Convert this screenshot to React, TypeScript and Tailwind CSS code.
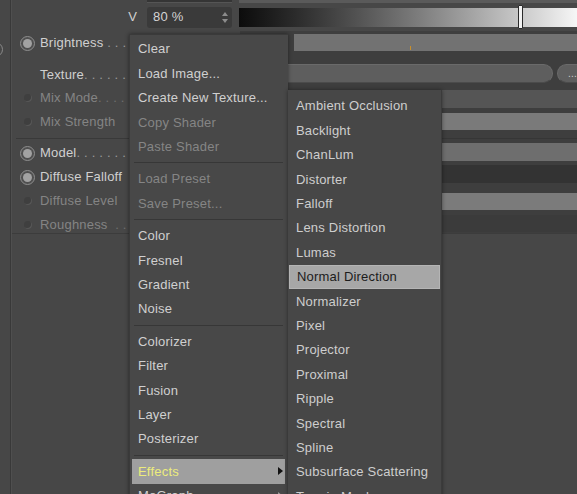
import type { ReactNode } from 'react';

type MenuEntry =
    | { kind: 'item'; label: string; disabled?: boolean; active?: boolean; sub?: boolean }
    | { kind: 'sep' };

const MAIN_MENU: MenuEntry[] = [
    { kind: 'item', label: 'Clear' },
    { kind: 'item', label: 'Load Image...' },
    { kind: 'item', label: 'Create New Texture...' },
    { kind: 'item', label: 'Copy Shader', disabled: true },
    { kind: 'item', label: 'Paste Shader', disabled: true },
    { kind: 'sep' },
    { kind: 'item', label: 'Load Preset', disabled: true },
    { kind: 'item', label: 'Save Preset...', disabled: true },
    { kind: 'sep' },
    { kind: 'item', label: 'Color' },
    { kind: 'item', label: 'Fresnel' },
    { kind: 'item', label: 'Gradient' },
    { kind: 'item', label: 'Noise' },
    { kind: 'sep' },
    { kind: 'item', label: 'Colorizer' },
    { kind: 'item', label: 'Filter' },
    { kind: 'item', label: 'Fusion' },
    { kind: 'item', label: 'Layer' },
    { kind: 'item', label: 'Posterizer' },
    { kind: 'sep' },
    { kind: 'item', label: 'Effects', active: true, sub: true },
    { kind: 'item', label: 'MoGraph', sub: true },
];

const EFFECTS = [
    'Ambient Occlusion',
    'Backlight',
    'ChanLum',
    'Distorter',
    'Falloff',
    'Lens Distortion',
    'Lumas',
    'Normal Direction',
    'Normalizer',
    'Pixel',
    'Projector',
    'Proximal',
    'Ripple',
    'Spectral',
    'Spline',
    'Subsurface Scattering',
    'Terrain Mask',
];

function RadioOn() {
    return (
        <div className="w-[15px] h-[15px] rounded-full border-[1.5px] border-[#8e8e8e] bg-[#505050] flex items-center justify-center">
            <div className="w-[9px] h-[9px] rounded-full bg-[#a2a2a2]" />
        </div>
    );
}

function RadioOff() {
    return <div className="w-[8px] h-[8px] rounded-full bg-[#3f3f3f] shadow-[inset_-1px_-1px_0_#575757]" />;
}

interface RowProps {
    h: string;
    lpt: string;
    fpt: string;
    label: string;
    dots?: string;
    radio?: 'on' | 'off';
    disabled?: boolean;
    children: ReactNode;
}

function Row({ h, lpt, fpt, label, dots, radio, disabled, children }: RowProps) {
    return (
        <div className={`flex ${h}`}>
            <div className={`w-[228px] shrink-0 pl-[8px] ${lpt}`}>
                <div className="flex items-center h-[16px]">
                    <div className="w-[15px] h-[15px] shrink-0 flex items-center justify-center">
                        {radio === 'on' && <RadioOn />}
                        {radio === 'off' && <RadioOff />}
                    </div>
                    <span
                        className={`ml-[5px] whitespace-pre ${disabled ? 'text-[#848484]' : 'text-[#d0d0d0]'}`}
                    >
                        {label}
                        {dots && <span className={disabled ? 'text-[#6f6f6f]' : 'text-[#9a9a9a]'}>{dots}</span>}
                    </span>
                </div>
            </div>
            <div className={`flex-1 bg-[#3e3e3e] ${fpt}`}>{children}</div>
        </div>
    );
}

function Arrow({ color }: { color: string }) {
    return (
        <svg width="5" height="8" viewBox="0 0 5 8">
            <path d="M0 0 L5 4 L0 8 Z" fill={color} />
        </svg>
    );
}

export default function App() {
    return (
        <div className="relative w-[577px] h-[494px] overflow-hidden bg-[#474747] text-[13px] tracking-[0.2px] font-['Liberation_Sans',Arial,sans-serif]">
            <div className="flex h-full">
                {/* 왼쪽 가장자리 */}
                <div className="w-[10px] shrink-0 flex flex-col overflow-hidden">
                    <div className="h-[42px]" />
                    <div className="-ml-[12px] w-[15px] h-[15px] rounded-full border-[1.5px] border-[#8a8a8a]" />
                </div>
                <div className="w-px bg-[#393939]" />
                <div className="w-px bg-[#4f4f4f]" />

                <div className="flex-1 flex flex-col min-w-0">
                    {/* 위쪽 잘린 줄 */}
                    <div className="h-[3px] flex">
                        <div className="w-[135px]" />
                        <div className="w-[85px] bg-[#353535] border-b border-[#555555]" />
                        <div className="w-[7px]" />
                        <div className="flex-1 bg-[#5a5a5a]" />
                    </div>

                    {/* V 값 + 그라디언트 */}
                    <div className="h-[28px] flex items-center">
                        <div className="w-[135px] flex justify-end pr-[10px] text-[#d0d0d0]">V</div>
                        <div className="w-[85px] h-[21px] rounded-[3px] bg-[#3a3a3a] flex items-center justify-between pl-[6px] pr-[4px] text-[#d4d4d4]">
                            <span>80 %</span>
                            <svg width="6" height="11" viewBox="0 0 6 11">
                                <path d="M3 0 L6 4 L0 4 Z M0 7 L6 7 L3 11 Z" fill="#8c8c8c" />
                            </svg>
                        </div>
                        <div className="ml-[7px] flex-1 h-[19px] relative bg-linear-to-r from-[#0c0c0c] to-[#f6f6f6]">
                            <div className="absolute left-[279px] -top-[3px] w-[5px] h-[24px] bg-[#f2f2f2] border border-[#2a2a2a] rounded-[1px]" />
                        </div>
                    </div>

                    {/* 속성 줄 */}
                    <Row h="h-[31px]" lpt="pt-[4px]" fpt="pt-[3px]" label="Brightness" dots=" . . ." radio="on">
                        <div className="ml-[54px] h-[17px] bg-[#727272] relative">
                            <div className="absolute left-[116px] top-[12px] w-px h-[4px] bg-[#c98f2a]" />
                        </div>
                    </Row>
                    <Row h="h-[26px]" lpt="pt-[5px]" fpt="pt-[2px]" label="Texture" dots=". . . . . .">
                        <div className="flex h-[19px]">
                            <div className="flex-1 rounded-full bg-[#5e5e5e] border border-[#6a6a6a] border-b-[#4b4b4b]" />
                            <div className="ml-[4px] w-[30px] -mr-[10px] rounded-full bg-[#5e5e5e] border border-[#6a6a6a] border-b-[#4b4b4b] flex items-center pl-[10px] text-[10px] text-[#cfcfcf]">
                                ...
                            </div>
                        </div>
                    </Row>
                    <Row h="h-[23px]" lpt="pt-[2px]" fpt="pt-[2px]" label="Mix Mode" dots=". . . ." radio="off" disabled>
                        <div className="h-[18px] bg-[#555555]" />
                    </Row>
                    <Row h="h-[24px]" lpt="pt-[3px]" fpt="pt-[2px]" label="Mix Strength" radio="off" disabled>
                        <div className="ml-[54px] h-[17px] bg-[#7a7a7a]" />
                    </Row>

                    <div className="flex h-[6px]">
                        <div className="w-[228px] shrink-0 pl-[4px] pt-[3px]">
                            <div className="h-px bg-[#393939]" />
                        </div>
                        <div className="flex-1 bg-[#3e3e3e] pt-[3px]">
                            <div className="h-px bg-[#363636]" />
                        </div>
                    </div>

                    <Row h="h-[23px]" lpt="pt-[4px]" fpt="pt-[2px]" label="Model" dots=". . . . . . ." radio="on">
                        <div className="h-[18px] bg-[#6e6e6e]" />
                    </Row>
                    <Row h="h-[27px]" lpt="pt-[5px]" fpt="pt-[1px]" label="Diffuse Falloff" radio="on">
                        <div className="h-[18px] bg-[#333333]" />
                    </Row>
                    <Row h="h-[23px]" lpt="pt-[2px]" fpt="pt-[2px]" label="Diffuse Level" radio="off" disabled>
                        <div className="ml-[54px] h-[17px] bg-[#7b7b7b]" />
                    </Row>
                    <Row h="h-[19px]" lpt="pt-[3px]" fpt="pt-[1px]" label="Roughness" dots="  . ." radio="off" disabled>
                        <div className="h-[17px] bg-[#3b3b3b]" />
                    </Row>
                    <div className="h-px bg-[#3c3c3c]" />
                </div>
            </div>

            {/* 메인 컨텍스트 메뉴 */}
            <div className="absolute left-[129px] top-[34px] w-[159px] h-[470px] bg-[#484848] border-l border-t border-[#3a3a3a] shadow-[0_0_4px_rgba(0,0,0,0.45)] pt-[2px] pl-[2px] pr-[3px]">
                {MAIN_MENU.map((entry, i) =>
                    entry.kind === 'sep' ? (
                        <div key={i} className="h-[8px] flex items-center px-[2px]">
                            <div className="flex-1 h-px bg-[#373737]" />
                        </div>
                    ) : (
                        <div
                            key={i}
                            className={`h-[24.4px] flex items-center justify-between pl-[6px] pr-[2px] whitespace-nowrap ${
                                entry.active
                                    ? 'bg-[#9f9f9f] text-[#ecec7c]'
                                    : entry.disabled
                                      ? 'text-[#858585]'
                                      : 'text-[#d0d0d0]'
                            }`}
                        >
                            <span>{entry.label}</span>
                            {entry.sub && <Arrow color={entry.active ? '#111111' : '#9a9a9a'} />}
                        </div>
                    )
                )}
            </div>

            {/* Effects 하위 메뉴 */}
            <div className="absolute left-[288px] top-[90px] w-[154px] h-[420px] bg-[#474747] border-r border-[#3b3b3b] shadow-[0_0_4px_rgba(0,0,0,0.45)] pt-[4px] px-[1px]">
                {EFFECTS.map((name) => (
                    <div
                        key={name}
                        className={`h-[24.4px] flex items-center pl-[7px] whitespace-nowrap ${
                            name === 'Normal Direction'
                                ? 'bg-[#a7a7a7] border border-[#b5b5b5] text-[#1c1c1c]'
                                : 'text-[#cecece]'
                        }`}
                    >
                        {name}
                    </div>
                ))}
            </div>
        </div>
    );
}
